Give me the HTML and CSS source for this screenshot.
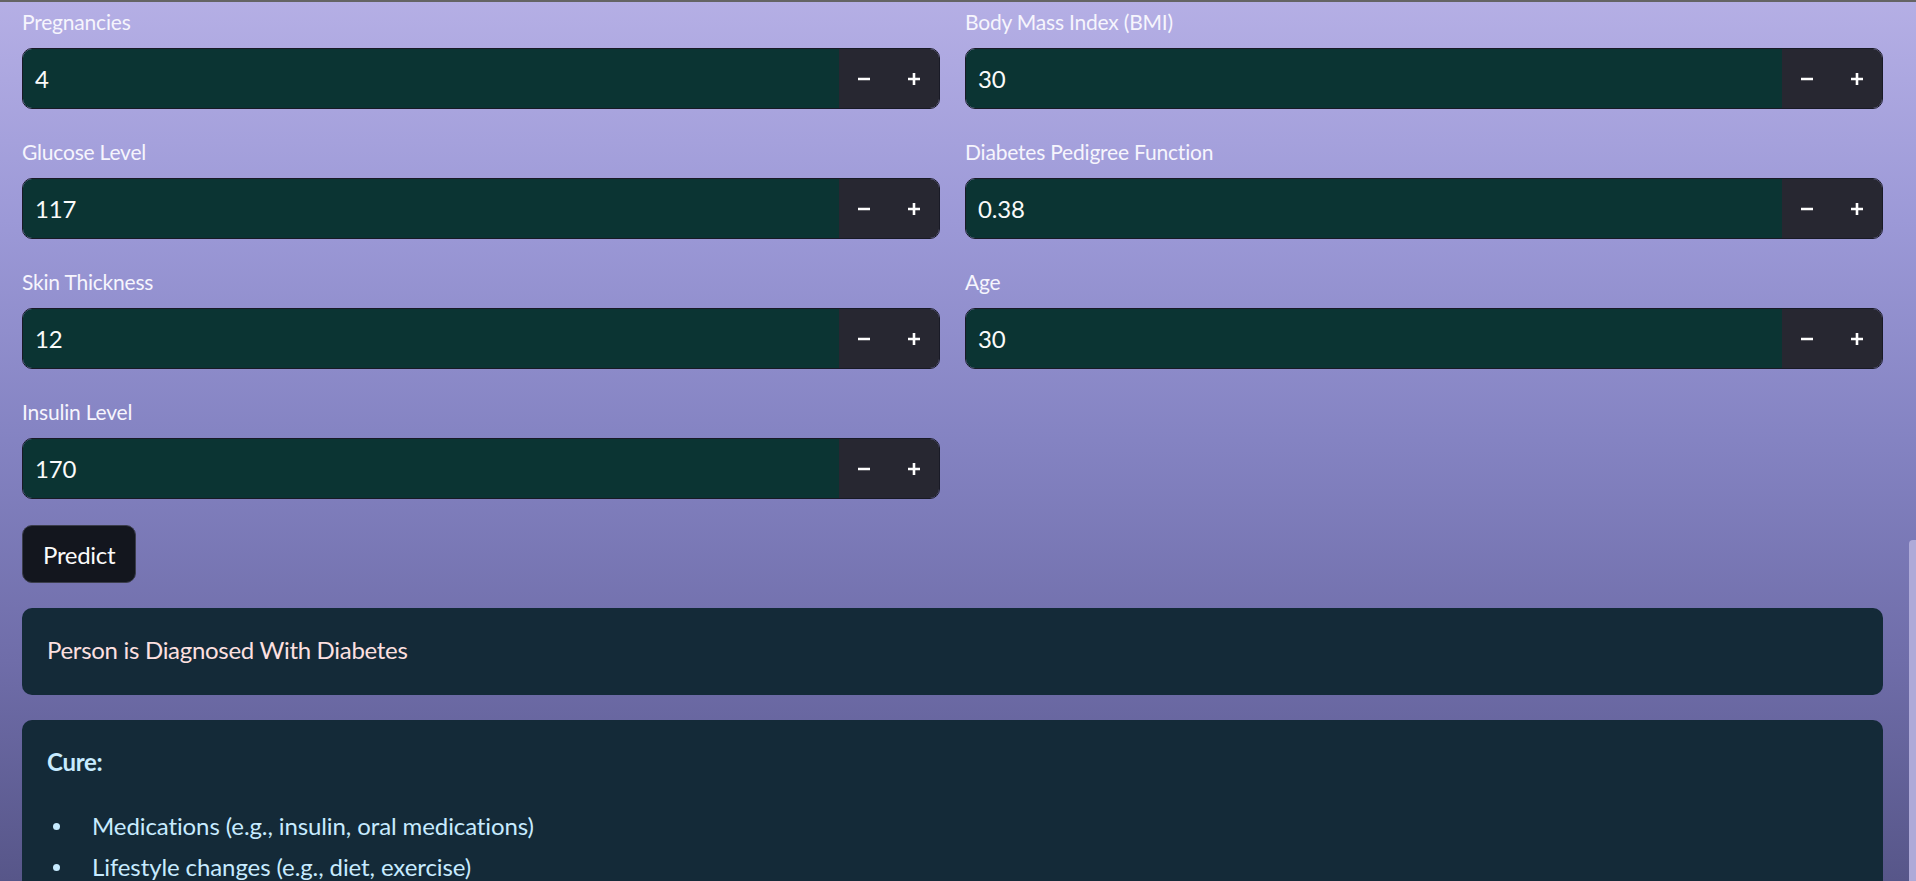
FILE: index.html
```html
<!DOCTYPE html>
<html lang="en">
<head>
<meta charset="utf-8">
<title>Diabetes Prediction</title>
<link rel="stylesheet" href="styles.css">
</head>
<body>
<div class="topline"></div>
<main class="main">
  <div class="cols">
    <div class="col">
      <div class="field">
        <label class="label">Pregnancies</label>
        <div class="numinput">
          <div class="value">4</div>
          <div class="steps">
            <span class="step"><svg viewBox="0 0 12 12" width="12" height="12"><path d="M0 6h12" /></svg></span>
            <span class="step"><svg viewBox="0 0 12 12" width="12" height="12"><path d="M0 6h12M6 0v12" /></svg></span>
          </div>
        </div>
      </div>
      <div class="field">
        <label class="label">Glucose Level</label>
        <div class="numinput">
          <div class="value">117</div>
          <div class="steps">
            <span class="step"><svg viewBox="0 0 12 12" width="12" height="12"><path d="M0 6h12" /></svg></span>
            <span class="step"><svg viewBox="0 0 12 12" width="12" height="12"><path d="M0 6h12M6 0v12" /></svg></span>
          </div>
        </div>
      </div>
      <div class="field">
        <label class="label">Skin Thickness</label>
        <div class="numinput">
          <div class="value">12</div>
          <div class="steps">
            <span class="step"><svg viewBox="0 0 12 12" width="12" height="12"><path d="M0 6h12" /></svg></span>
            <span class="step"><svg viewBox="0 0 12 12" width="12" height="12"><path d="M0 6h12M6 0v12" /></svg></span>
          </div>
        </div>
      </div>
      <div class="field">
        <label class="label">Insulin Level</label>
        <div class="numinput">
          <div class="value">170</div>
          <div class="steps">
            <span class="step"><svg viewBox="0 0 12 12" width="12" height="12"><path d="M0 6h12" /></svg></span>
            <span class="step"><svg viewBox="0 0 12 12" width="12" height="12"><path d="M0 6h12M6 0v12" /></svg></span>
          </div>
        </div>
      </div>
    </div>
    <div class="col">
      <div class="field">
        <label class="label">Body Mass Index (BMI)</label>
        <div class="numinput">
          <div class="value">30</div>
          <div class="steps">
            <span class="step"><svg viewBox="0 0 12 12" width="12" height="12"><path d="M0 6h12" /></svg></span>
            <span class="step"><svg viewBox="0 0 12 12" width="12" height="12"><path d="M0 6h12M6 0v12" /></svg></span>
          </div>
        </div>
      </div>
      <div class="field">
        <label class="label">Diabetes Pedigree Function</label>
        <div class="numinput">
          <div class="value">0.38</div>
          <div class="steps">
            <span class="step"><svg viewBox="0 0 12 12" width="12" height="12"><path d="M0 6h12" /></svg></span>
            <span class="step"><svg viewBox="0 0 12 12" width="12" height="12"><path d="M0 6h12M6 0v12" /></svg></span>
          </div>
        </div>
      </div>
      <div class="field">
        <label class="label">Age</label>
        <div class="numinput">
          <div class="value">30</div>
          <div class="steps">
            <span class="step"><svg viewBox="0 0 12 12" width="12" height="12"><path d="M0 6h12" /></svg></span>
            <span class="step"><svg viewBox="0 0 12 12" width="12" height="12"><path d="M0 6h12M6 0v12" /></svg></span>
          </div>
        </div>
      </div>
    </div>
  </div>
  <div class="actions">
    <button class="predict" type="button">Predict</button>
  </div>
  <div class="alert alert-result">
    <p>Person is Diagnosed With Diabetes</p>
  </div>
  <div class="alert alert-info">
    <p><strong>Cure:</strong></p>
    <ul class="cure-list">
      <li>Medications (e.g., insulin, oral medications)</li>
      <li>Lifestyle changes (e.g., diet, exercise)</li>
    </ul>
  </div>
</main>
<div class="scroll-thumb"></div>
</body>
</html>
```

FILE: styles.css
```css
html, body {
  margin: 0;
  padding: 0;
  height: 881px;
  overflow: hidden;
}

body {
  font-family: "Lato", "Noto Sans", sans-serif;
  background: linear-gradient(180deg, #b5afe5 0%, #9c99d7 25%, #8483c2 50%, #6f6da9 75%, #575689 100%);
  color: #fafafa;
}

.topline {
  height: 2px;
  background: #646464;
}

.main {
  padding: 4px 33px 0 22px;
  display: flex;
  flex-direction: column;
}

.cols {
  display: grid;
  grid-template-columns: 1fr 1fr;
  column-gap: 25px;
  align-items: start;
}

.col {
  display: flex;
  flex-direction: column;
  gap: 27px;
}

.field {
  display: flex;
  flex-direction: column;
}

.label {
  font-size: 21px;
  letter-spacing: -0.2px;
  line-height: 32px;
  margin-bottom: 10px;
  color: #f6f5fd;
}

.numinput {
  display: flex;
  height: 61px;
  box-sizing: border-box;
  border: 1px solid #191a26;
  border-radius: 10px;
  overflow: hidden;
}

.value {
  flex: 1;
  display: flex;
  align-items: center;
  padding-left: 12px;
  background: #0b3433;
  font-size: 24px;
  letter-spacing: -0.2px;
  color: #fafafa;
}

.steps {
  display: flex;
  width: 100px;
  background: #272731;
}

.step {
  flex: 1;
  display: flex;
  align-items: center;
  justify-content: center;
}

.step svg {
  stroke: #ffffff;
  stroke-width: 2.6;
  fill: none;
}

.actions {
  margin-top: 26px;
  display: flex;
}

.predict {
  height: 58px;
  padding: 0 20px;
  background: #13161e;
  border: 1px solid #3b3d4c;
  border-radius: 10px;
  color: #fafafa;
  font-family: inherit;
  font-size: 24px;
  letter-spacing: -0.3px;
}

.alert {
  margin-top: 25px;
  background: #142a38;
  border-radius: 10px;
  font-size: 24px;
  letter-spacing: -0.3px;
}

.alert p {
  margin: 0;
  line-height: 40px;
}

.alert-result {
  padding: 22px 25px 25px;
  color: #fde0e0;
}

.alert-info {
  padding: 22px 25px 25px;
  color: #c7ebff;
}

.alert-info strong {
  font-weight: 700;
}

.cure-list {
  list-style: none;
  margin: 24px 0 0;
  padding: 0;
  letter-spacing: -0.1px;
}

.cure-list li {
  display: flex;
  line-height: 40px;
  margin-bottom: 1px;
}

.cure-list li::before {
  content: "";
  flex: none;
  width: 7px;
  height: 7px;
  border-radius: 50%;
  background: currentColor;
  margin: 17px 32px 0 6px;
}

.scroll-thumb {
  position: fixed;
  right: 0;
  top: 540px;
  width: 7px;
  height: 360px;
  border-radius: 4px 0 0 0;
  background: #aeaad8;
}
```
